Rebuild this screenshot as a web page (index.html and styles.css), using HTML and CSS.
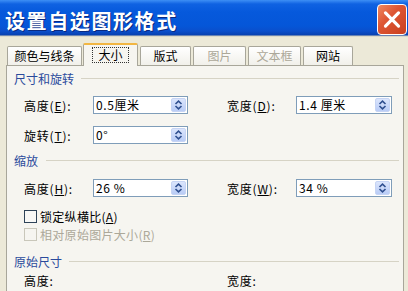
FILE: index.html
```html
<!DOCTYPE html>
<html lang="zh">
<head>
<meta charset="utf-8">
<link rel="stylesheet" href="styles.css">
</head>
<body>
<div class="window">
  <div class="titlebar">
    <span class="title">设置自选图形格式</span>
    <span class="close">
      <svg width="30" height="31" viewBox="0 0 30 31"><path d="M8 8.5 L22 22.5 M22 8.5 L8 22.5" stroke="#fff" stroke-width="3.4" stroke-linecap="round"/></svg>
    </span>
  </div>
  <div class="body">
    <div class="tabs">
      <div class="tab t1">颜色与线条</div>
      <div class="tab t2 active"><span class="focus">大小</span></div>
      <div class="tab t3">版式</div>
      <div class="tab t4 disabled">图片</div>
      <div class="tab t5 disabled">文本框</div>
      <div class="tab t6">网站</div>
    </div>
    <div class="panel">
      <div class="ghead g1"><span>尺寸和旋转</span><i class="rule"></i></div>
      <div class="row r1">
        <div class="field"><span class="label">高度(<u>E</u>):</span><span class="input"><span class="val">0.5厘米</span><span class="spin"><svg width="9" height="10" viewBox="0 0 9 10"><path d="M1.5 4 L4.5 1.2 L7.5 4 M1.5 6 L4.5 8.8 L7.5 6" fill="none" stroke="#2f4f8f" stroke-width="1.6"/></svg></span></span></div>
        <div class="field"><span class="label">宽度(<u>D</u>):</span><span class="input wide"><span class="val">1.4 厘米</span><span class="spin"><svg width="9" height="10" viewBox="0 0 9 10"><path d="M1.5 4 L4.5 1.2 L7.5 4 M1.5 6 L4.5 8.8 L7.5 6" fill="none" stroke="#2f4f8f" stroke-width="1.6"/></svg></span></span></div>
      </div>
      <div class="row r2">
        <div class="field"><span class="label">旋转(<u>T</u>):</span><span class="input"><span class="val">0°</span><span class="spin"><svg width="9" height="10" viewBox="0 0 9 10"><path d="M1.5 4 L4.5 1.2 L7.5 4 M1.5 6 L4.5 8.8 L7.5 6" fill="none" stroke="#2f4f8f" stroke-width="1.6"/></svg></span></span></div>
      </div>
      <div class="ghead g2"><span>缩放</span><i class="rule"></i></div>
      <div class="row r3">
        <div class="field"><span class="label">高度(<u>H</u>):</span><span class="input"><span class="val">26 %</span><span class="spin"><svg width="9" height="10" viewBox="0 0 9 10"><path d="M1.5 4 L4.5 1.2 L7.5 4 M1.5 6 L4.5 8.8 L7.5 6" fill="none" stroke="#2f4f8f" stroke-width="1.6"/></svg></span></span></div>
        <div class="field"><span class="label">宽度(<u>W</u>):</span><span class="input wide"><span class="val">34 %</span><span class="spin"><svg width="9" height="10" viewBox="0 0 9 10"><path d="M1.5 4 L4.5 1.2 L7.5 4 M1.5 6 L4.5 8.8 L7.5 6" fill="none" stroke="#2f4f8f" stroke-width="1.6"/></svg></span></span></div>
      </div>
      <div class="check c1"><span class="box"></span><span class="ctext">锁定纵横比(<u>A</u>)</span></div>
      <div class="check c2 disabled"><span class="box"></span><span class="ctext">相对原始图片大小(<u>R</u>)</span></div>
      <div class="ghead g3"><span>原始尺寸</span><i class="rule"></i></div>
      <div class="row r5">
        <div class="field"><span class="label">高度:</span></div>
        <div class="field"><span class="label">宽度:</span></div>
      </div>
    </div>
  </div>
</div>
</body>
</html>
```
FILE: styles.css
```css
* { box-sizing: border-box; }
html, body { margin: 0; padding: 0; }
body {
  width: 408px;
  height: 291px;
  overflow: hidden;
  font-family: "Noto Sans CJK SC", "Noto Sans", sans-serif;
  font-size: 12px;
  color: #000;
  background: #ece9d8;
}
.window { width: 408px; height: 291px; display: flex; flex-direction: column; }
.titlebar {
  height: 37px;
  flex: none;
  display: flex;
  align-items: center;
  padding-left: 5px;
  background: linear-gradient(to bottom, #3d8ff5 0px, #0f62e2 4px, #0659dc 12px, #0556d8 26px, #0a4fcc 31px, #0841b0 35px, #c9c7ba 36px, #ece9d8 37px);
}
.title {
  color: #fff;
  font-weight: bold;
  font-size: 20px;
  letter-spacing: 1.6px;
  text-shadow: 1px 1px 0 #0a2a80;
  line-height: 24px;
  margin-top: 4px;
}
.close {
  margin-left: auto;
  margin-right: 1px;
  width: 30px;
  height: 31px;
  border: 1px solid #fff;
  border-radius: 4px;
  background: linear-gradient(135deg, #ef8a62 0%, #de5634 40%, #c9401f 100%);
  display: flex;
  align-items: center;
  justify-content: center;
  margin-top: 2px;
}
.close svg { display: block; }
.body { flex: 1; padding: 6px 4px 0 6px; display: flex; flex-direction: column; }
.tabs {
  display: flex;
  align-items: flex-end;
  height: 22px;
  padding-left: 1px;
  position: relative;
  z-index: 1;
}
.tab {
  height: 19px;
  border: 1px solid #a8a69a;
  border-bottom: none;
  border-radius: 2px 2px 0 0;
  background: linear-gradient(to bottom, #ffffff, #f1f0ea);
  display: flex;
  align-items: center;
  justify-content: center;
  line-height: 14px;
  margin-right: 2px;
}
.t1 { width: 75px; margin-right: 1px; }
.t2 { width: 55px; }
.t3 { width: 51px; }
.t4 { width: 53px; }
.t5 { width: 53px; }
.t6 { width: 50px; }
.tab.active {
  height: 23px;
  margin-bottom: -1px;
  border-top: 2px solid #f2b642;
  background: #f6f5f0;
  padding-bottom: 1px;
}
.focus {
  border: 1px dotted #333;
  padding: 0 5px;
  line-height: 14px;
}
.tab.disabled { color: #aca899; }
.panel {
  flex: 1;
  background: #f6f5f0;
  border: 1px solid #a8a69a;
  border-bottom: none;
  padding: 4px 4px 0 7px;
}
.ghead {
  display: flex;
  align-items: center;
  height: 16px;
  color: #2a4a9c;
}
.ghead .rule {
  flex: 1;
  height: 1px;
  background: #d6d3c5;
  margin-left: 7px;
  margin-top: 1px;
}
.g2 { margin-top: 8px; }
.g2 .rule { margin-left: 8px; }
.g3 { margin-top: 11px; }
.row {
  display: grid;
  grid-template-columns: 203px 1fr;
  padding-left: 10px;
  height: 18px;
  align-items: center;
}
.r1 { margin-top: 10px; }
.r2 { margin-top: 12px; }
.r3 { margin-top: 11px; }
.r5 { margin-top: 2px; height: 16px; }
.field { display: flex; align-items: center; height: 18px; }
.label { width: 69px; flex: none; letter-spacing: 0.8px; }
.input {
  width: 95px;
  height: 18px;
  background: #fff;
  border: 1px solid #7f9db9;
  display: flex;
  align-items: center;
  padding: 1px 1px 1px 2px;
}
.input.wide { width: 96px; }
.val { flex: 1; line-height: 14px; letter-spacing: 0.6px; }
.spin {
  width: 15px;
  height: 14px;
  background: linear-gradient(to bottom, #dbe5fc, #b9ccf6);
  border: 1px solid #c6d4f4;
  border-radius: 2px;
  display: flex;
  align-items: center;
  justify-content: center;
}
.spin svg { display: block; }
.check {
  display: flex;
  align-items: center;
  height: 16px;
  padding-left: 10px;
}
.ctext { letter-spacing: 0.3px; }
.c1 { margin-top: 11px; }
.c2 { margin-top: 2px; }
.box {
  width: 13px;
  height: 13px;
  border: 1px solid #2e4358;
  background: #f8f8f6;
  margin-right: 3px;
}
.check.disabled { color: #aca899; }
.check.disabled .box { border-color: #c9c7ba; background: #f6f5f0; }
```
